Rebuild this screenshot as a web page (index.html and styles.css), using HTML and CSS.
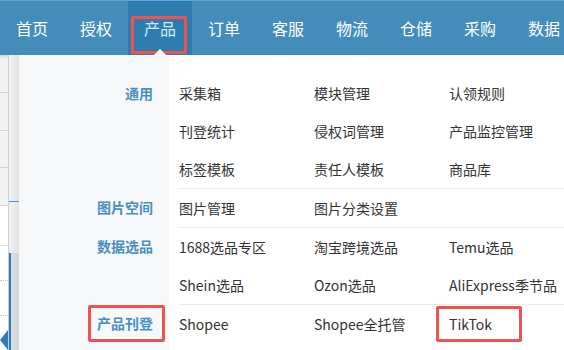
FILE: index.html
```html
<!DOCTYPE html>
<html lang="zh-CN">
<head>
<meta charset="UTF-8">
<meta name="viewport" content="width=device-width, initial-scale=1.0">
<title>产品菜单</title>
<link rel="stylesheet" href="styles.css">
</head>
<body>
<!-- Top navigation -->
<nav class="topnav">
    <a class="nav-item">首页</a>
    <a class="nav-item">授权</a>
    <a class="nav-item active">产品</a>
    <a class="nav-item">订单</a>
    <a class="nav-item">客服</a>
    <a class="nav-item">物流</a>
    <a class="nav-item">仓储</a>
    <a class="nav-item">采购</a>
    <a class="nav-item">数据</a>
</nav>
<div class="main">
    <!-- Page content peeking out behind the dropdown -->
    <div class="page-edge">
        <div class="edge-table">
            <div class="edge-row first"></div>
            <div class="edge-row"></div>
            <div class="edge-row"></div>
            <div class="edge-row"></div>
            <div class="edge-body">
                <div class="edge-line"></div>
                <div class="edge-line dotted"></div>
                <div class="edge-line dotted"></div>
                <span class="edge-handle"></span>
            </div>
        </div>
        <div class="edge-shadow">
            <div class="shadow-top"><span class="shadow-mark"></span></div>
            <div class="shadow-bottom"></div>
        </div>
    </div>
    <!-- Product dropdown -->
    <div class="menu-panel">
        <div class="menu-group">
            <div class="group-title">通用</div>
            <div class="group-items">
                <span>采集箱</span><span>模块管理</span><span>认领规则</span>
                <span>刊登统计</span><span>侵权词管理</span><span>产品监控管理</span>
                <span>标签模板</span><span>责任人模板</span><span>商品库</span>
            </div>
        </div>
        <div class="menu-group">
            <div class="group-title">图片空间</div>
            <div class="group-items">
                <span>图片管理</span><span>图片分类设置</span>
            </div>
        </div>
        <div class="menu-group">
            <div class="group-title">数据选品</div>
            <div class="group-items">
                <span>1688选品专区</span><span>淘宝跨境选品</span><span>Temu选品</span>
                <span>Shein选品</span><span>Ozon选品</span><span>AliExpress季节品</span>
            </div>
        </div>
        <div class="menu-group">
            <div class="group-title"><span class="mark mark-title">产品刊登</span></div>
            <div class="group-items">
                <span>Shopee</span><span>Shopee全托管</span><span><span class="mark mark-tiktok">TikTok</span></span>
            </div>
        </div>
    </div>
</div>
</body>
</html>
```

FILE: styles.css
```css
/* Basic page styling */
body {
    margin: 0;
    width: 564px;
    height: 350px;
    overflow: hidden;
    font-family: "Noto Sans CJK SC", "Microsoft YaHei", sans-serif;
    background-color: #fff;
}
/* Top navigation */
.topnav {
    display: flex;
    height: 55px;
    background-color: #448dba;
    border-top: 1px solid #6aa5c9;
    box-sizing: border-box;
}
.nav-item {
    position: relative;
    flex: none;
    width: 64px;
    text-align: center;
    font-size: 16px;
    line-height: 54px;
    color: #fff;
}
.nav-item.active {
    background-color: #2f7dae;
    color: #cfeaff;
}
/* Red highlight on the active tab */
.nav-item.active::after {
    content: "";
    position: absolute;
    top: 15px;
    left: 3px;
    right: 5px;
    bottom: 1px;
    border: 3px solid #f0524f;
    border-radius: 2px;
}
/* Caret under the active tab */
.nav-item.active::before {
    content: "";
    position: absolute;
    left: 26px;
    bottom: 0;
    border-left: 6px solid transparent;
    border-right: 6px solid transparent;
    border-bottom: 6px solid #fff;
    z-index: 1;
}
.main {
    display: flex;
    height: 295px;
}
/* Page behind the dropdown */
.page-edge {
    flex: none;
    display: flex;
    width: 19px;
}
.edge-table {
    width: 8px;
    display: flex;
    flex-direction: column;
}
.edge-row {
    height: 39px;
    background-color: #f3f3f3;
    border-bottom: 1px solid #d6d6d6;
}
.edge-row.first {
    height: 40px;
    background: linear-gradient(#cfd6dc, #f3f3f3 4px);
}
.edge-body {
    position: relative;
    flex: 1;
    background-color: #fff;
    padding-top: 39px;
}
.edge-line {
    height: 34px;
    border-top: 1px solid #e2e2e2;
}
.edge-line.dotted {
    border-top: 1px dotted #c8c8c8;
}
.edge-handle {
    position: absolute;
    left: 0;
    bottom: 0;
    border-top: 10px solid transparent;
    border-bottom: 10px solid transparent;
    border-right: 8px solid #2f7dbf;
}
.edge-shadow {
    width: 11px;
    display: flex;
    flex-direction: column;
    border-left: 1px solid #cfcfcf;
    box-sizing: border-box;
}
.shadow-top {
    height: 198px;
    background: linear-gradient(to right, #f1f1f1, #e3e3e3);
}
.shadow-mark {
    display: block;
    margin-top: 146px;
    height: 1px;
    background-color: #4a8fd0;
}
.shadow-bottom {
    flex: 1;
    background: linear-gradient(to right, #2f7dbf 2px, #dcdee2 2px, #d2d4d8);
}
/* Dropdown panel */
.menu-panel {
    flex: 1;
    padding-top: 19px;
    background: linear-gradient(to right, #f6f8fa 150px, #fff 150px);
}
.menu-group {
    display: grid;
    grid-template-columns: 150px 1fr;
}
.group-title {
    padding-right: 16px;
    text-align: right;
    font-size: 14px;
    font-weight: bold;
    line-height: 38px;
    color: #4a8fc2;
}
.group-items {
    display: grid;
    grid-template-columns: repeat(3, 135px);
    margin-left: 10px;
    font-size: 14px;
    line-height: 38px;
    color: #333;
    white-space: nowrap;
}
.menu-group + .menu-group .group-items {
    border-top: 1px solid #ebebeb;
}
/* Red annotation boxes */
.mark {
    position: relative;
}
.mark::after {
    content: "";
    position: absolute;
    border: 3px solid #f0524f;
    border-radius: 2px;
}
.mark-title::after {
    top: -8px;
    bottom: -9px;
    left: -9px;
    right: -12px;
}
.mark-tiktok::after {
    top: -8px;
    bottom: -8px;
    left: -13px;
    right: -30px;
}
```
